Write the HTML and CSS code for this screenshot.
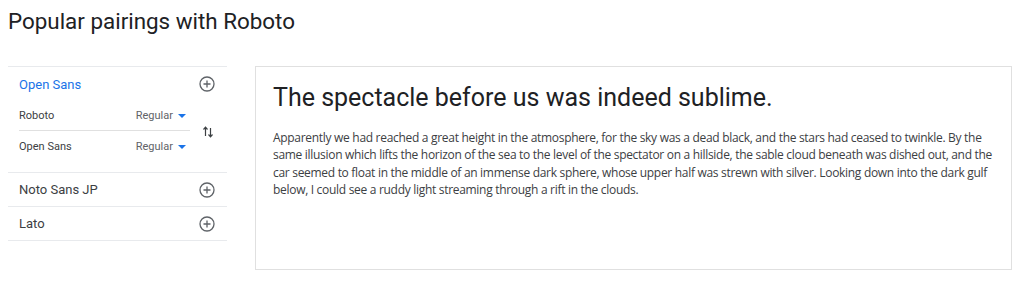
FILE: index.html
```html
<!DOCTYPE html>
<html>
<head>
<meta charset="utf-8">
<link rel="stylesheet" href="styles.css">
</head>
<body>
<h1 class="title">Popular pairings with Roboto</h1>
<div class="main">
  <div class="pairs">
    <div class="group active">
      <div class="row head">
        <span class="name blue">Open Sans</span>
        <svg class="plus" width="16" height="16" viewBox="0 0 16 16"><circle cx="8" cy="8" r="7" fill="none" stroke="#5f6368" stroke-width="1.3"/><path d="M8 4.5v7M4.5 8h7" stroke="#5f6368" stroke-width="1.3" fill="none"/></svg>
      </div>
      <div class="sub">
        <div class="subrows">
          <div class="subrow first">
            <span class="small">Roboto</span>
            <span class="sel">Regular <span class="tri"></span></span>
          </div>
          <div class="subrow">
            <span class="small">Open Sans</span>
            <span class="sel">Regular <span class="tri"></span></span>
          </div>
        </div>
        <div class="swap">
          <svg width="12" height="14" viewBox="0 0 12 14"><path d="M3.5 11V2.5M1.5 4.5L3.5 2.2 5.5 4.5" stroke="#3c4043" stroke-width="1.2" fill="none"/><path d="M8.5 3v8.5M6.5 9.5L8.5 11.8 10.5 9.5" stroke="#3c4043" stroke-width="1.2" fill="none"/></svg>
        </div>
      </div>
    </div>
    <div class="row item">
      <span class="name">Noto Sans JP</span>
      <svg class="plus" width="16" height="16" viewBox="0 0 16 16"><circle cx="8" cy="8" r="7" fill="none" stroke="#5f6368" stroke-width="1.3"/><path d="M8 4.5v7M4.5 8h7" stroke="#5f6368" stroke-width="1.3" fill="none"/></svg>
    </div>
    <div class="row item">
      <span class="name">Lato</span>
      <svg class="plus" width="16" height="16" viewBox="0 0 16 16"><circle cx="8" cy="8" r="7" fill="none" stroke="#5f6368" stroke-width="1.3"/><path d="M8 4.5v7M4.5 8h7" stroke="#5f6368" stroke-width="1.3" fill="none"/></svg>
    </div>
  </div>
  <div class="card">
    <h2 class="heading">The spectacle before us was indeed sublime.</h2>
    <p class="para">Apparently we had reached a great height in the atmosphere, for the sky was a dead black, and the stars had ceased to twinkle. By the same illusion which lifts the horizon of the sea to the level of the spectator on a hillside, the sable cloud beneath was dished out, and the car seemed to float in the middle of an immense dark sphere, whose upper half was strewn with silver. Looking down into the dark gulf below, I could see a ruddy light streaming through a rift in the clouds.</p>
  </div>
</div>
</body>
</html>
```
FILE: styles.css
```css
body {
  margin: 8px;
  background: #fff;
  font-family: Roboto, "Liberation Sans", sans-serif;
  color: #202124;
}
.title {
  margin: 0;
  font-size: 22.4px;
  line-height: 27px;
  font-weight: 400;
  color: #202124;
}
.main {
  display: flex;
  gap: 28px;
  margin-top: 31px;
  margin-right: 4px;
  align-items: flex-start;
}
.pairs {
  width: 219px;
  flex: none;
  border-top: 1px solid #e8eaed;
}
.group {
  border-bottom: 1px solid #e8eaed;
  padding-bottom: 10px;
}
.row {
  display: flex;
  align-items: center;
  justify-content: space-between;
  padding: 0 12px 0 11px;
}
.head {
  height: 34px;
}
.item {
  height: 33px;
  border-bottom: 1px solid #e8eaed;
}
.name {
  font-size: 13px;
  color: #3c4043;
}
.blue {
  color: #1a73e8;
}
.plus {
  display: block;
}
.sub {
  display: flex;
  align-items: center;
  padding-left: 11px;
}
.subrows {
  width: 171px;
}
.subrow {
  display: flex;
  align-items: center;
  justify-content: space-between;
  height: 31px;
  padding-right: 4px;
}
.subrow.first {
  height: 29px;
  border-bottom: 1px solid #e0e0e0;
}
.small {
  font-size: 11px;
  color: #3c4043;
}
.sel {
  font-size: 11px;
  color: #5f6368;
  display: flex;
  align-items: center;
  gap: 5px;
}
.tri {
  width: 0;
  height: 0;
  border-left: 4px solid transparent;
  border-right: 4px solid transparent;
  border-top: 4px solid #1a73e8;
}
.swap {
  flex: 1;
  display: flex;
  justify-content: center;
  padding-right: 2px;
}
.swap svg {
  display: block;
}
.card {
  flex: 1;
  border: 1px solid #e0e0e0;
  padding: 15px 17px 0 17px;
  box-sizing: border-box;
  height: 204px;
}
.heading {
  margin: 0;
  font-size: 25px;
  line-height: 32px;
  font-weight: 400;
  color: #202124;
}
.para {
  margin: 15px 0 0 0;
  font-family: "Open Sans", sans-serif;
  font-size: 12px;
  letter-spacing: -0.3px;
  line-height: 17.3px;
  color: #3c4043;
}
```
